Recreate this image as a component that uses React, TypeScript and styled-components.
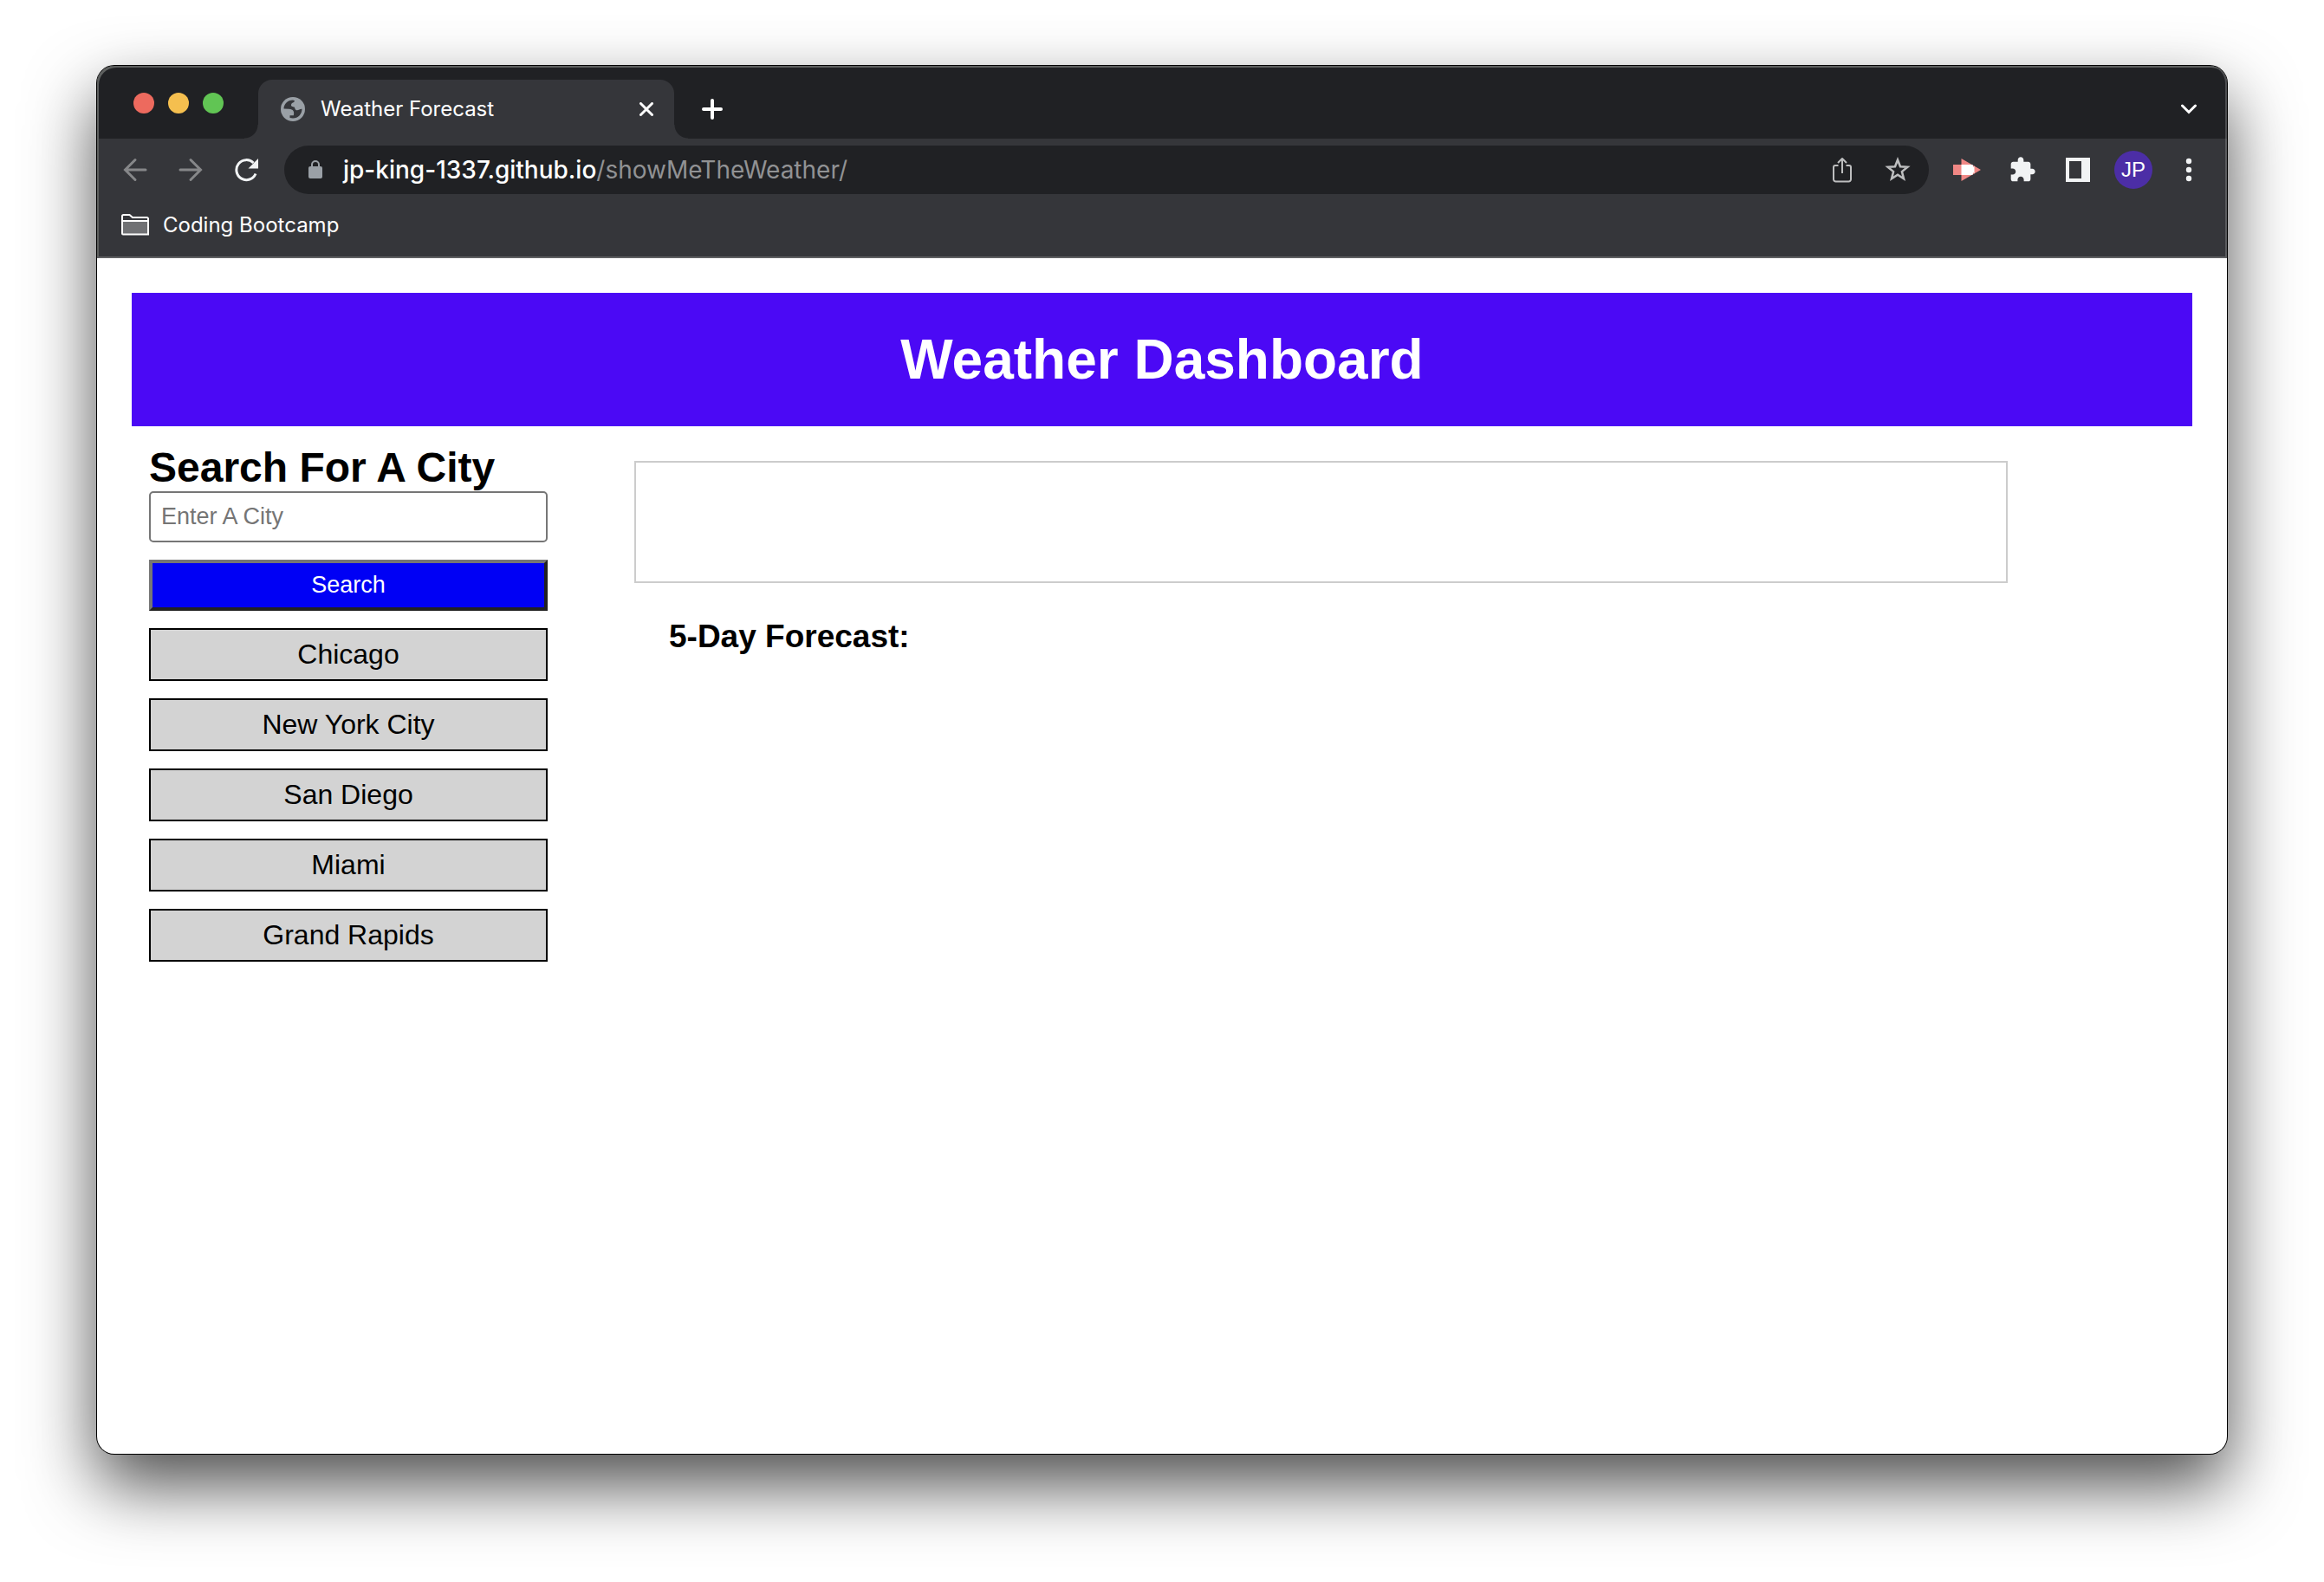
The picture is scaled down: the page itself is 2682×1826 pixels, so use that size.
import React, { useState } from "react";
import styled, { createGlobalStyle } from "styled-components";

const ui = `Inter, "Liberation Sans", sans-serif`;
const web = `"Liberation Sans", Arial, sans-serif`;

const GlobalStyle = createGlobalStyle`
  *, *::before, *::after { box-sizing: border-box; }
  body { margin: 0; background: #fff; font-family: ${web}; color: #000; }
  h1, h2, h3 { margin: 0; }
`;

const Desktop = styled.div`
  display: flex;
  min-height: 100vh;
  padding: 76px 112px 148px;
  overflow: hidden;
`;

const BrowserWindow = styled.div`
  flex: 1;
  min-width: 0;
  display: flex;
  flex-direction: column;
  border-radius: 20px;
  background: #fff;
  box-shadow: 0 0 0 1px #000, 0 36px 80px rgba(0, 0, 0, 0.7);
`;

const Chrome = styled.header`
  border-radius: 20px 20px 0 0;
  overflow: hidden;
  background: #35363a;
  border-bottom: 2px solid #5f6062;
  box-shadow: inset 2px 2px 0 #5e605f, inset -2px 0 0 #5a5b5e;
  font-family: ${ui};
  color: #fff;
`;

const TabStrip = styled.div`
  display: flex;
  align-items: flex-end;
  height: 84px;
  background: #202124;
  padding: 0 32px 0 42px;
  box-shadow: inset 2px 2px 0 #5e605f, inset -2px 0 0 #4c4d50;
  border-radius: 20px 20px 0 0;
`;

const Lights = styled.div`
  display: flex;
  gap: 16px;
  width: 144px;
  padding-bottom: 29px;
`;

const Light = styled.button<{ $color: string }>`
  width: 24px;
  height: 24px;
  padding: 0;
  border: 0;
  border-radius: 50%;
  background: ${(p) => p.$color};
`;

const Tab = styled.div`
  position: relative;
  display: flex;
  align-items: center;
  width: 480px;
  height: 68px;
  padding: 0 24px 0 26px;
  border-radius: 16px 16px 0 0;
  background: #35363a;
  font-size: 24px;
  line-height: 30px;

  &::before,
  &::after {
    content: "";
    position: absolute;
    bottom: 0;
    width: 16px;
    height: 16px;
  }
  &::before {
    left: -16px;
    background: radial-gradient(circle at 0 0, transparent 15px, #35363a 16px);
  }
  &::after {
    right: -16px;
    background: radial-gradient(circle at 100% 0, transparent 15px, #35363a 16px);
  }
`;

const TabTitle = styled.span`
  flex: 1;
  margin-left: 18px;
`;

const IconButton = styled.button<{ $w?: number; $h?: number }>`
  display: flex;
  flex: none;
  align-items: center;
  justify-content: center;
  width: ${(p) => p.$w ?? 64}px;
  height: ${(p) => p.$h ?? 56}px;
  padding: 0;
  border: 0;
  background: none;
  color: inherit;
`;

const Spacer = styled.div`
  flex: 1;
`;

const Toolbar = styled.div`
  display: flex;
  align-items: center;
  padding: 8px 12px 0;
`;

const AddressBar = styled.div`
  display: flex;
  flex: 1;
  align-items: center;
  height: 56px;
  margin: 0 12px;
  padding: 0 4px 0 24px;
  border-radius: 28px;
  background: #202124;
`;

const Address = styled.a`
  flex: 1;
  margin-left: 20px;
  font-size: 28px;
  line-height: 36px;
  color: #919294;
  text-decoration: none;
`;

const Host = styled.span`
  font-weight: 500;
  color: #fff;
`;

const Avatar = styled.span`
  display: flex;
  align-items: center;
  justify-content: center;
  width: 44px;
  height: 44px;
  border-radius: 50%;
  background: #4c2ea6;
  font-size: 24px;
  line-height: 30px;
`;

const Bookmarks = styled.nav`
  display: flex;
  align-items: center;
  height: 72px;
  padding: 0 28px;
`;

const Bookmark = styled.button`
  display: flex;
  align-items: center;
  gap: 16px;
  padding: 0;
  border: 0;
  background: none;
  font: 24px/30px ${ui};
  color: #fff;
`;

const Page = styled.div`
  flex: 1;
  padding: 40px;
`;

const Banner = styled.header`
  padding: 40px;
  background: #4b09f5;
  color: #fff;
  text-align: center;
`;

const Title = styled.h1`
  font-size: 64px;
  line-height: 74px;
`;

const Columns = styled.div`
  display: grid;
  grid-template-columns: 500px 66.65%;
  column-gap: 80px;
`;

const SearchPanel = styled.form`
  display: flex;
  flex-direction: column;
  gap: 20px;
  padding: 20px;
`;

const Field = styled.div`
  display: flex;
  flex-direction: column;
`;

const SearchLabel = styled.label`
  font-size: 48px;
  font-weight: bold;
  line-height: 55px;
`;

const CityInput = styled.input`
  width: 100%;
  height: 59px;
  padding: 0 12px;
  border: 2px solid #767676;
  border-radius: 5px;
  background: #fff;
  font: 27px/31px ${web};
  color: #000;

  &::placeholder {
    color: #757575;
    opacity: 1;
  }
`;

const SearchButton = styled.button`
  height: 59px;
  padding: 0;
  border: 4px solid;
  border-color: #767676 #212121 #212121 #767676;
  border-radius: 0;
  background: #0000f5;
  font: 27px/31px ${web};
  color: #fff;
`;

const CityButton = styled.button`
  padding: 10px;
  border: 2px solid #000;
  border-radius: 0;
  background: #d3d3d3;
  font: 32px/37px ${web};
  color: #000;
`;

const Forecast = styled.main`
  padding-top: 40px;
`;

const Current = styled.section`
  height: 141px;
  border: 2px solid #ccc;
`;

const ForecastTitle = styled.h3`
  padding: 40px;
  font-size: 37px;
  line-height: 43px;
`;

const cities = ["Chicago", "New York City", "San Diego", "Miami", "Grand Rapids"];

export default function App() {
  const [city, setCity] = useState("");

  return (
    <>
      <GlobalStyle />
      <Desktop>
        <BrowserWindow>
          <Chrome>
            <TabStrip>
              <Lights>
                <Light $color="#ed6a5e" aria-label="Close window" />
                <Light $color="#f5bf4f" aria-label="Minimise window" />
                <Light $color="#61c554" aria-label="Zoom window" />
              </Lights>
              <Tab>
                <svg width="28" height="28" viewBox="0 0 28 28" aria-hidden="true">
                  <circle cx="14" cy="14" r="14" fill="#9aa0a6" />
                  <path
                    d="M3.500 13.500C3.500 8 8 3.600 14 3.500L16 4.200C16 6.500 12.500 6 12 9C11.800 11 14 11.200 15.500 11.500C16.500 12 16 14.500 18 15.200C20.500 15.800 22 13.500 24.500 13.800C24.500 20 20 24.500 14 24.600L10.500 24V21.200H14.800C16 17 14.500 14 9.500 13.800Z"
                    fill="#35363a"
                  />
                </svg>
                <TabTitle>Weather Forecast</TabTitle>
                <IconButton $w={16} $h={16} aria-label="Close tab">
                  <svg width="16" height="16" viewBox="0 0 16 16" fill="none" stroke="currentColor" strokeWidth="3" strokeLinecap="round">
                    <path d="M1.500 1.500l13 13M14.500 1.500l-13 13" />
                  </svg>
                </IconButton>
              </Tab>
              <IconButton $w={88} $h={68} aria-label="New tab">
                <svg width="24" height="24" viewBox="0 0 24 24" fill="none" stroke="currentColor" strokeWidth="4" strokeLinecap="round">
                  <path d="M12 2v20M2 12h20" />
                </svg>
              </IconButton>
              <Spacer />
              <IconButton $w={24} $h={68} aria-label="Search tabs">
                <svg width="20" height="12" viewBox="0 0 20 12" fill="none" stroke="currentColor" strokeWidth="3" strokeLinecap="round">
                  <path d="M2.500 2l7.500 7.500L17.500 2" />
                </svg>
              </IconButton>
            </TabStrip>

            <Toolbar>
              <IconButton aria-label="Back">
                <svg width="28" height="28" viewBox="0 0 28 28" fill="none" stroke="#868789" strokeWidth="3" strokeLinecap="round">
                  <path d="M26 14H3M14 2.500L2.500 14 14 25.500" />
                </svg>
              </IconButton>
              <IconButton aria-label="Forward">
                <svg width="28" height="28" viewBox="0 0 28 28" fill="none" stroke="#868789" strokeWidth="3" strokeLinecap="round">
                  <path d="M2 14h23M14 2.500L25.500 14 14 25.500" />
                </svg>
              </IconButton>
              <IconButton aria-label="Reload">
                <svg width="28" height="28" viewBox="0 0 28 28">
                  <path d="M25 18.500A11.500 11.500 0 1 1 22.500 6" fill="none" stroke="#f1f3f4" strokeWidth="3" />
                  <path d="M28 1v11.500H16.500z" fill="#f1f3f4" />
                </svg>
              </IconButton>
              <AddressBar>
                <IconButton $w={24} aria-label="Site information">
                  <svg width="16" height="22" viewBox="0 0 16 22">
                    <rect y="7" width="16" height="14" rx="2" fill="#9aa0a6" />
                    <path d="M4 8V5a4 4 0 0 1 8 0v3" fill="none" stroke="#9aa0a6" strokeWidth="2" />
                  </svg>
                </IconButton>
                <Address href="#">
                  <Host>jp-king-1337.github.io</Host>/showMeTheWeather/
                </Address>
                <IconButton aria-label="Share">
                  <svg width="22" height="30" viewBox="0 0 22 30" fill="none" stroke="#bdbebf" strokeWidth="2" strokeLinejoin="round">
                    <path d="M6.500 10H3a2 2 0 0 0-2 2v14a2.500 2.500 0 0 0 2.500 2.500h15A2.500 2.500 0 0 0 21 26V12a2 2 0 0 0-2-2h-3.500M11 19V2M6 7l5-5 5 5" />
                  </svg>
                </IconButton>
                <IconButton aria-label="Bookmark this page">
                  <svg width="30" height="30" viewBox="0 0 30 30" fill="none" stroke="#bdbebf" strokeWidth="2.500">
                    <path d="M15 3.500l3 7.700 8.400.600-6.500 5.300 2.100 8.200-7-4.500-7 4.500 2.100-8.200-6.500-5.300 8.400-.600z" />
                  </svg>
                </IconButton>
              </AddressBar>
              <IconButton aria-label="Screen recorder extension">
                <svg width="32" height="26" viewBox="0 0 32 26">
                  <path d="M0 7h9.500V0L32 13 9.500 26v-7H0z" fill="#f08784" />
                  <path d="M9.500 7h12a2 2 0 0 1 1.500 1v2l1.500-1.500v9L23 16v2a2 2 0 0 1-1.500 1h-12z" fill="#fff" />
                </svg>
              </IconButton>
              <IconButton aria-label="Extensions">
                <svg width="32" height="32" viewBox="0 0 24 24" fill="#f1f3f4">
                  <path d="M20.500 11H19V7c0-1.100-.900-2-2-2h-4V3.500C13 2.120 11.880 1 10.500 1S8 2.120 8 3.500V5H4c-1.100 0-1.990.900-1.990 2v3.800H3.500c1.490 0 2.700 1.210 2.700 2.700s-1.210 2.700-2.700 2.700H2V20c0 1.100.900 2 2 2h3.800v-1.500c0-1.490 1.210-2.700 2.700-2.700 1.490 0 2.700 1.210 2.700 2.700V22H17c1.100 0 2-.900 2-2v-4h1.500c1.380 0 2.500-1.120 2.500-2.500S21.880 11 20.500 11z" />
                </svg>
              </IconButton>
              <IconButton aria-label="Side panel">
                <svg width="28" height="28" viewBox="0 0 28 28" fill="#f1f3f4" fillRule="evenodd">
                  <path d="M0 0h28v28H0zM4 4v20h14V4z" />
                </svg>
              </IconButton>
              <IconButton aria-label="Profile">
                <Avatar>JP</Avatar>
              </IconButton>
              <IconButton aria-label="Menu">
                <svg width="8" height="28" viewBox="0 0 8 28" fill="#f1f3f4">
                  <circle cx="4" cy="4" r="3.200" />
                  <circle cx="4" cy="14" r="3.200" />
                  <circle cx="4" cy="24" r="3.200" />
                </svg>
              </IconButton>
            </Toolbar>

            <Bookmarks>
              <Bookmark>
                <svg width="32" height="26" viewBox="0 0 32 26">
                  <path d="M1 8h30v15.500H1z" fill="#707174" />
                  <path d="M1 2.500A1.500 1.500 0 0 1 2.500 1h7L13 4h16.500A1.500 1.500 0 0 1 31 5.500v18H2A1 1 0 0 1 1 22.500zM1 8h30" fill="none" stroke="#fff" strokeWidth="2" />
                </svg>
                Coding Bootcamp
              </Bookmark>
            </Bookmarks>
          </Chrome>

          <Page>
            <Banner>
              <Title>Weather Dashboard</Title>
            </Banner>
            <Columns>
              <SearchPanel onSubmit={(e) => e.preventDefault()}>
                <Field>
                  <SearchLabel htmlFor="city">Search For A City</SearchLabel>
                  <CityInput
                    id="city"
                    type="text"
                    placeholder="Enter A City"
                    value={city}
                    onChange={(e) => setCity(e.target.value)}
                  />
                </Field>
                <SearchButton type="submit">Search</SearchButton>
                {cities.map((name) => (
                  <CityButton key={name} type="button" onClick={() => setCity(name)}>
                    {name}
                  </CityButton>
                ))}
              </SearchPanel>
              <Forecast>
                <Current aria-label="Current weather" />
                <ForecastTitle>5-Day Forecast:</ForecastTitle>
              </Forecast>
            </Columns>
          </Page>
        </BrowserWindow>
      </Desktop>
    </>
  );
}
